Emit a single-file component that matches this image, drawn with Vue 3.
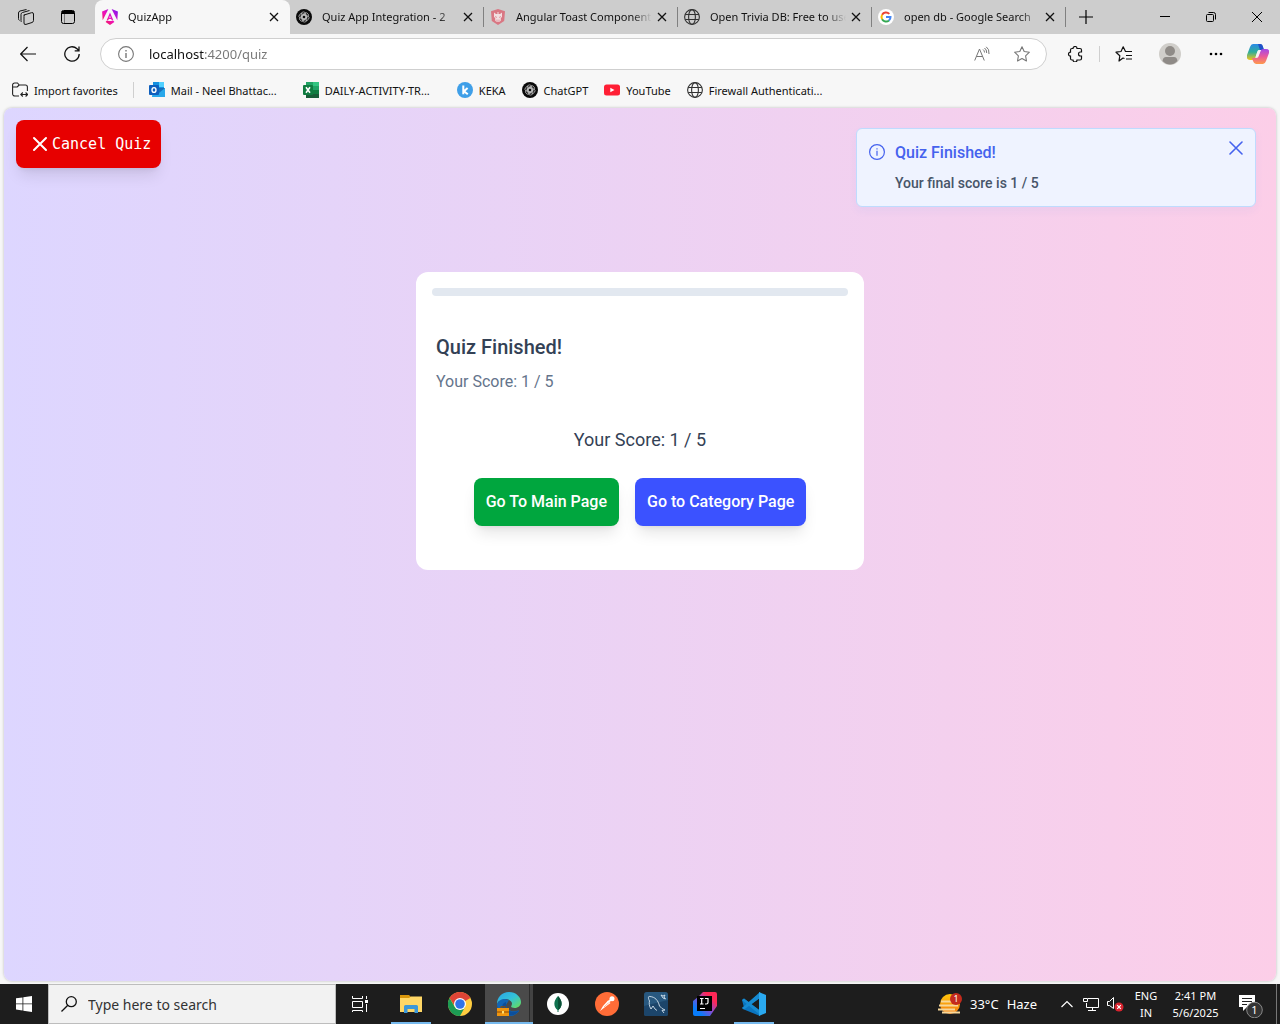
<script setup>
import { ref } from 'vue'

const address = ref('localhost:4200/quiz')
const search = ref('')
const score = 1
const total = 5

const tabs = [
  { title: 'QuizApp', icon: 'angular', active: true },
  { title: 'Quiz App Integration - 2', icon: 'gpt' },
  { title: 'Angular Toast Component', icon: 'prime' },
  { title: 'Open Trivia DB: Free to use', icon: 'globe' },
  { title: 'open db - Google Search', icon: 'google' },
]

const bookmarks = [
  { title: 'Mail - Neel Bhattac...', icon: 'outlook', long: true },
  { title: 'DAILY-ACTIVITY-TR...', icon: 'excel', long: true },
  { title: 'KEKA', icon: 'keka' },
  { title: 'ChatGPT', icon: 'gpt' },
  { title: 'YouTube', icon: 'youtube' },
  { title: 'Firewall Authenticati...', icon: 'globe' },
]

const apps = [
  { name: 'File Explorer', icon: 'explorer', open: true },
  { name: 'Chrome', icon: 'chrome' },
  { name: 'Edge', icon: 'edge', current: true },
  { name: 'MongoDB Compass', icon: 'mongo' },
  { name: 'Postman', icon: 'postman' },
  { name: 'MySQL Workbench', icon: 'mysql' },
  { name: 'IntelliJ IDEA', icon: 'idea' },
  { name: 'Visual Studio Code', icon: 'vscode', open: true },
]
</script>

<template>
  <div class="desktop">
    <svg class="sprite" aria-hidden="true">
      <defs>
        <linearGradient id="ng" x1="0" y1="1" x2="1" y2="0">
          <stop offset="0" stop-color="#f0223c" /><stop offset=".45" stop-color="#f011b8" /><stop offset="1" stop-color="#7a14f5" />
        </linearGradient>
        <linearGradient id="edgeTop" x1="0" y1="0" x2="1" y2="1">
          <stop offset="0" stop-color="#2aa5e8" /><stop offset=".5" stop-color="#33c3d8" /><stop offset="1" stop-color="#6be04f" />
        </linearGradient>
        <linearGradient id="ideaBg" x1="0" y1="1" x2="1" y2="0">
          <stop offset=".2" stop-color="#087cfa" /><stop offset=".5" stop-color="#8a4bd0" /><stop offset=".75" stop-color="#fe2857" />
        </linearGradient>
        <linearGradient id="copA" x1="0" y1="0" x2="0" y2="1">
          <stop offset="0" stop-color="#2a8ae8" /><stop offset=".5" stop-color="#2fae9a" /><stop offset="1" stop-color="#f5c518" />
        </linearGradient>
        <linearGradient id="copB" x1="0" y1="0" x2="0" y2="1">
          <stop offset="0" stop-color="#a349e8" /><stop offset=".5" stop-color="#ea5a9c" /><stop offset="1" stop-color="#ff9a4a" />
        </linearGradient>
        <linearGradient id="sun" x1="0" y1="0" x2="0" y2="1">
          <stop offset="0" stop-color="#ffc60a" /><stop offset="1" stop-color="#f47a12" />
        </linearGradient>
      </defs>
      <symbol id="i-angular" viewBox="0 0 16 16">
        <path fill="url(#ng)" fill-rule="evenodd" d="M9.600 0 15.900 2.600 15.300 11.300zM6.400 0 .1 2.600.7 11.300zM8 3.500 11.400 11.600H9.900L9.200 9.900H6.800L6.100 11.600H4.600zM12.400 13.100 8 16 3.600 13.100 4.400 12H11.600zM8 6.800 7.200 8.800H8.800z" />
      </symbol>
      <symbol id="i-gpt" viewBox="0 0 16 16">
        <circle cx="8" cy="8" r="8" fill="#0a0a0a" />
        <g fill="none" stroke="#c8c8c8" stroke-width=".7">
          <rect x="5.200" y="2.900" width="4.600" height="7.400" rx="2.300" />
          <rect x="5.200" y="2.900" width="4.600" height="7.400" rx="2.300" transform="rotate(60 8 8)" />
          <rect x="5.200" y="2.900" width="4.600" height="7.400" rx="2.300" transform="rotate(120 8 8)" />
          <rect x="5.200" y="2.900" width="4.600" height="7.400" rx="2.300" transform="rotate(180 8 8)" />
          <rect x="5.200" y="2.900" width="4.600" height="7.400" rx="2.300" transform="rotate(240 8 8)" />
          <rect x="5.200" y="2.900" width="4.600" height="7.400" rx="2.300" transform="rotate(300 8 8)" />
        </g>
      </symbol>
      <symbol id="i-prime" viewBox="0 0 16 16">
        <path fill="#d97783" d="M8 0 15 2.200 14.200 12 8 16 1.800 12 1 2.200z" />
        <path fill="#f2dfe1" d="M4 3.500 6 5H7.500V3H8.500V5H10L12 3.500V8L10.800 9V11.500L9.500 13H6.500L5.200 11.500V9L4 8z" />
        <path stroke="#d97783" stroke-width=".7" d="M5 7.500 7 8.500M11 7.500 9 8.500M7 10.500V13M9 10.500V13" />
      </symbol>
      <symbol id="i-globe" viewBox="0 0 16 16">
        <g fill="none" stroke="#333" stroke-width="1.100">
          <circle cx="8" cy="8" r="7.400" /><ellipse cx="8" cy="8" rx="3.400" ry="7.400" /><path d="M1.200 5.500H14.800M1.200 10.500H14.800" />
        </g>
      </symbol>
      <symbol id="i-google" viewBox="0 0 16 16">
        <circle cx="8" cy="8" r="8" fill="#fff" />
        <g fill="none" stroke-width="2">
          <path stroke="#ea4335" d="M4.100 5.800A4.500 4.500 0 0 1 11.300 4.900" />
          <path stroke="#fbbc05" d="M4.100 5.800A4.500 4.500 0 0 0 4.100 10.200" />
          <path stroke="#34a853" d="M4.100 10.200A4.500 4.500 0 0 0 11 11.400" />
          <path stroke="#4285f4" d="M8 8H12.500A4.500 4.500 0 0 1 11 11.400" />
        </g>
      </symbol>
      <symbol id="i-outlook" viewBox="0 0 16 16">
        <path fill="#1490df" d="M4 0H15V10H4z" /><path fill="#50d0ff" d="M10 0H15V5H10z" /><path fill="#28a8ea" d="M4 7 16 6V15H3z" />
        <path fill="#0a4a9a" d="M5 6H16L10 11z" opacity=".6" /><rect y="3" width="10" height="10" rx="1" fill="#0f5fbd" />
        <ellipse cx="5" cy="8" rx="2" ry="2.400" fill="none" stroke="#fff" stroke-width="1.400" />
      </symbol>
      <symbol id="i-excel" viewBox="0 0 16 16">
        <path fill="#21a366" d="M3 0H10V8H3z" /><path fill="#33c481" d="M10 0H16V4H10z" /><path fill="#21a366" d="M10 4H16V8H10z" /><path fill="#107c41" d="M10 8H16V12H10z" /><path fill="#185c37" d="M3 8H10V12H16V16H3z" />
        <rect y="3" width="10" height="10" rx="1" fill="#107c41" /><path stroke="#fff" stroke-width="1.600" d="M3 5.200 7 10.800M7 5.200 3 10.800" />
      </symbol>
      <symbol id="i-keka" viewBox="0 0 16 16">
        <circle cx="8" cy="8" r="8" fill="#3f9fe8" /><path fill="none" stroke="#fff" stroke-width="2" d="M6.300 3.500V12.200M10.600 6 7 9.200 10.800 12.200" />
      </symbol>
      <symbol id="i-youtube" viewBox="0 0 16 16">
        <rect y="2.500" width="16" height="11" rx="2.500" fill="#ff1f35" /><path fill="#fff" d="M6.300 5.800 10.500 8 6.300 10.200z" />
      </symbol>
      <symbol id="i-import" viewBox="0 0 16 16">
        <path fill="none" stroke="#222" stroke-width="1.100" d="M7 14H3A2.200 2.200 0 0 1 .6 12V3A2 2 0 0 1 2.600 1H5.500L7.200 3H13.400A2 2 0 0 1 15.400 5V9M.8 5H5.200L7.200 3M9 12.500H15.500M10.800 10.500 8.800 12.500 10.800 14.500M13.600 10.500 15.600 12.500 13.600 14.500" />
      </symbol>
      <symbol id="i-close" viewBox="0 0 16 16">
        <path fill="none" stroke="currentColor" stroke-width="1.300" d="M4 4 12 12M12 4 4 12" />
      </symbol>
      <symbol id="i-explorer" viewBox="0 0 24 24">
        <path fill="#d9960a" d="M1 3H10L12 5V8H1z" /><path fill="#ffd766" d="M1 6H10L12 4.500H23V20H1z" /><path fill="#3d98d8" d="M5 20V14.500Q5 13 6.500 13H17.500Q19 13 19 14.500V21H15.500V17H8.500V21H5z" />
      </symbol>
      <symbol id="i-chrome" viewBox="0 0 24 24">
        <circle cx="12" cy="12" r="12" fill="#ffcd40" /><path fill="#de4436" d="M12 12 6 13 1.600 6A12 12 0 0 1 22.400 6z" /><path fill="#1c9b54" d="M1.600 6 6.800 15 12 18 17 15 12 24A12 12 0 0 1 1.600 6z" />
        <circle cx="12" cy="12" r="6" fill="#fff" /><circle cx="12" cy="12" r="4.800" fill="#2f73e8" />
      </symbol>
      <symbol id="i-edge" viewBox="0 0 24 24">
        <path fill="#1265b5" d="M0 12A12 12 0 0 0 19 22C22 20 23 18 21 18.500 14 21 9 17 9 13L12 8 4 6z" />
        <path fill="#0c4f9c" d="M9 10C8 18 14 22 22 18.500 18 25 11 25 7 20 4 15 5 11 9 10z" />
        <path fill="url(#edgeTop)" d="M0 12C0 5 5 0 12 0 19 0 24 5 24 10 24 15 19 17 15 15.500 13 14.500 15 14 15 11.500 15 9 12 7 8 7 4 7 1 9 0 12z" />
        <path fill="#f0960e" d="M0 16H12V24H0z" /><path fill="#8d4b04" d="M3.500 16V14.200H8.500V16H7.300V15.200H4.700V16zM0 19.500H12V20.500H0z" /><path fill="#ffdf70" d="M5 19H7V21.500H5z" />
      </symbol>
      <symbol id="i-mongo" viewBox="0 0 24 24">
        <circle cx="12" cy="12" r="11" fill="#fff" /><path fill="#10724f" d="M12 4C17 9 16.500 15 12.500 18V20H11.500V18C7.500 15 7 9 12 4z" /><path fill="#0a4f36" d="M12 4C17 9 16.500 15 12.200 18z" />
      </symbol>
      <symbol id="i-postman" viewBox="0 0 24 24">
        <circle cx="12" cy="12" r="12" fill="#ff6c37" /><path fill="#fff" d="M8 14 13 8.500 15.500 11 9.500 15.500 5 19z" /><circle cx="17" cy="6.800" r="2.500" fill="#fff" /><path stroke="#ffb598" d="M9 15 15 9.500" /><path stroke="#fff" stroke-width="2" d="M13 10 17 7" />
      </symbol>
      <symbol id="i-mysql" viewBox="0 0 24 24">
        <rect width="24" height="24" rx="2.500" fill="#28587f" /><path fill="#1c456a" d="M0 14 24 8V22Q24 24 22 24H2Q0 24 0 22z" />
        <path fill="none" stroke="#d5e3ee" stroke-width=".9" d="M7 17C5 14 5 11 5.500 9 4 6 4 4 6 4.500 11 5 14 8 15.500 14L18 16.500 21 18 18 18.500 20 21M7 17 9 14 11 17 13 18.500M17 3 19 4 21 3 20 5 21.500 7 19 6z" />
      </symbol>
      <symbol id="i-idea" viewBox="0 0 24 24">
        <path fill="url(#ideaBg)" d="M0 9 5 5 10 0H22Q24 0 24 2V14L17 24H2Q0 24 0 22z" /><rect x="4" y="4" width="15" height="15" fill="#000" />
        <path fill="none" stroke="#fff" stroke-width="1.200" d="M7 6.500H10.500M8.700 6.500V12M7 12H10.500M12 6.500H15V10.500Q15 12 13.300 12H12M7 16.500H12" />
      </symbol>
      <symbol id="i-vscode" viewBox="0 0 24 24">
        <path fill="#0a75bf" d="M0 8 2 6.500 18 19V24L2 17.500 0 16 14 4 18 5.500 2.500 17.500" /><path fill="#168bd2" d="M0 8 2 6.500 18 18.500V23zM0 16 18 0V6L2 17.500z" /><path fill="#2aa9f0" d="M17 0 24 3V21L17 24z" />
      </symbol>
    </svg>

    <header class="browser">
      <div class="tab-strip">
        <div class="strip-tools">
          <button class="strip-btn" aria-label="Workspaces">
            <svg width="16" height="16" viewBox="0 0 16 16" fill="none" stroke="#111"><path d="M5.500 6.200 13.500 3.700Q15.500 3.200 15.500 5V11.500Q15.500 13 14 13.500L8 15.400Q6 16 6 14V7.500Q6 6 7 5.700M3.500 13Q3 12.500 3 11.500V5.500Q3 4 4.500 3.500L11.500 1.500M1.500 11.500Q.5 11 .5 9.500V4Q.5 2.500 2 2L8.500.5" /></svg>
          </button>
          <button class="strip-btn" aria-label="Tab actions">
            <svg width="14" height="14" viewBox="0 0 14 14"><rect x=".5" y=".5" width="13" height="13" rx="2" fill="none" stroke="#000" /><path d="M1 1H13V4H1z" fill="#000" /><path d="M3.500 4V13" stroke="#777" /></svg>
          </button>
        </div>
        <div v-for="tab in tabs" :key="tab.title" class="tab" :class="{ active: tab.active }">
          <button class="tab-main">
            <svg width="16" height="16" class="fav"><use :href="'#i-' + tab.icon" /></svg>
            <span class="tab-title">{{ tab.title }}</span>
          </button>
          <button class="tab-close" :aria-label="'Close ' + tab.title"><svg width="16" height="16"><use href="#i-close" /></svg></button>
        </div>
        <button class="new-tab" aria-label="New tab">
          <svg width="14" height="14" viewBox="0 0 14 14" stroke="#000"><path d="M7 0V14M0 7H14" stroke-width="1.200" /></svg>
        </button>
        <div class="window-controls">
          <button aria-label="Minimize"><svg width="10" height="10" viewBox="0 0 10 10" stroke="#000"><path d="M0 4.500H10" /></svg></button>
          <button aria-label="Restore"><svg width="10" height="10" viewBox="0 0 10 10" fill="none" stroke="#000"><rect x=".5" y="2.500" width="7" height="7" rx="1" /><path d="M2.500.5H7.500Q9.500.5 9.500 2.500V7.500" /></svg></button>
          <button aria-label="Close"><svg width="10" height="10" viewBox="0 0 10 10" stroke="#000"><path d="M0 0 10 10M10 0 0 10" /></svg></button>
        </div>
      </div>

      <div class="toolbar">
        <button class="nav" aria-label="Back">
          <svg width="16" height="16" viewBox="0 0 16 16" fill="none" stroke="#111" stroke-width="1.200"><path d="M7.500 1 .7 8 7.500 15M.7 8H16" /></svg>
        </button>
        <button class="nav" aria-label="Refresh">
          <svg width="16" height="16" viewBox="0 0 16 16" fill="none" stroke="#111" stroke-width="1.300"><path d="M15.200 8A7.200 7.200 0 1 1 13 2.800L14.800 4.500M15 .5V4.800H10.700" /></svg>
        </button>
        <label class="address">
          <svg width="16" height="16" viewBox="0 0 16 16"><circle cx="8" cy="8" r="7.400" fill="none" stroke="#777" stroke-width="1.100" /><path d="M7.300 7H8.700V12H7.300zM7.300 4H8.700V5.500H7.300z" fill="#777" /></svg>
          <input v-model="address" type="text" aria-label="Address" />
          <button aria-label="Read aloud">
            <svg width="16" height="16" viewBox="0 0 16 16" fill="none" stroke="#777"><path d="M.7 14.500 5.500 3 10.300 14.500M2.400 10.500H8.600M9 3.500Q10.500 4.500 10.500 6.500M10.500 2Q12.800 3.500 12.700 7M12.200.8Q15.500 3 15 8" /></svg>
          </button>
          <button aria-label="Add to favorites">
            <svg width="16" height="16" viewBox="0 0 16 16" fill="none" stroke="#777" stroke-width="1.100" stroke-linejoin="round"><path d="M8 .8 10.200 5.500 15.400 6.200 11.600 9.800 12.500 15 8 12.500 3.500 15 4.400 9.800.6 6.200 5.800 5.500z" /></svg>
          </button>
        </label>
        <div class="tools">
          <button aria-label="Extensions">
            <svg width="16" height="16" viewBox="0 0 16 16" fill="none" stroke="#111" stroke-width="1.200"><path d="M6 2.500A2 2 0 0 1 10 2.500H13Q14.500 2.500 14.500 4V6H13.500A2 2 0 0 0 13.500 10H14.500V12.500Q14.500 14 13 14H10A2 2 0 0 1 6 14H5Q3.500 14 3.500 12.500V10.200A2 2 0 0 1 3.500 6.200V4Q3.500 2.500 5 2.500z" /></svg>
          </button>
          <span class="rule"></span>
          <button aria-label="Favorites">
            <svg width="18" height="16" viewBox="0 0 18 16" fill="none" stroke="#111" stroke-width="1.200" stroke-linejoin="round"><path d="M9.500 12.500 8 12 4 15 4.800 9.800 1 6.200 6 5.500 8.200.8 10.500 5.500H17M11 9.500H17M11 13H17" /></svg>
          </button>
          <button class="spaced" aria-label="Profile">
            <svg width="22" height="22" viewBox="0 0 22 22"><circle cx="11" cy="11" r="11" fill="#d0ceca" /><circle cx="11" cy="8" r="5" fill="#8f8b87" /><path d="M3.500 18Q4 14 7 14H15Q18 14 18.500 18Q15 21.500 11 21.500T3.500 18z" fill="#8f8b87" /></svg>
          </button>
          <button class="spaced" aria-label="Settings and more">
            <svg width="14" height="4" viewBox="0 0 14 4"><circle cx="2" cy="2" r="1.300" /><circle cx="7" cy="2" r="1.300" /><circle cx="12" cy="2" r="1.300" /></svg>
          </button>
          <button class="copilot" aria-label="Copilot">
            <svg width="22" height="20" viewBox="0 0 22 20"><path fill="url(#copA)" d="M6 0H13Q15 0 16 3L17 6H13Q11 6 10 9L8 15Q7 16 5 16H3Q-1 16 0 11L3 3Q4 0 6 0z" /><path fill="#2052c8" d="M11 0H13.500Q15.500 0 16 3L17 6H13z" /><path fill="url(#copB)" d="M16 20H9Q7 20 6 17L5 14H9Q11 14 12 11L14 6Q15 5 17 5H19Q23 5 22 9L19 17Q18 20 16 20z" /><path fill="#f6f3f4" d="M10.500 7 8.500 13.500H11L13.500 6H11.500z" /></svg>
          </button>
        </div>
      </div>

      <nav class="bookmarks" aria-label="Favorites bar">
        <a href="#"><svg width="16" height="16"><use href="#i-import" /></svg>Import favorites</a>
        <span class="rule"></span>
        <a v-for="b in bookmarks" :key="b.title" href="#" :class="{ long: b.long }">
          <svg width="16" height="16"><use :href="'#i-' + b.icon" /></svg>{{ b.title }}
        </a>
      </nav>
    </header>

    <main class="page">
      <button class="cancel">
        <svg width="16" height="16" viewBox="0 0 16 16" stroke="#fff" stroke-width="2" stroke-linecap="round"><path d="M2 2 14 14M14 2 2 14" /></svg>
        Cancel Quiz
      </button>

      <section class="card">
        <div class="progress" role="progressbar" aria-label="Quiz progress" aria-valuenow="0"></div>
        <div class="card-body">
          <h1>Quiz Finished!</h1>
          <p class="subtitle">Your Score: {{ score }} / {{ total }}</p>
          <p class="score">Your Score: {{ score }} / {{ total }}</p>
          <div class="actions">
            <button class="main-page">Go To Main Page</button>
            <button class="category-page">Go to Category Page</button>
          </div>
        </div>
      </section>

      <aside class="toast" role="status">
        <svg class="toast-icon" width="16" height="16" viewBox="0 0 16 16"><circle cx="8" cy="8" r="7.400" fill="none" stroke="#4562ee" stroke-width="1.200" /><path d="M7.400 6.800H8.600V11.800H7.400zM7.400 4.200H8.600V5.600H7.400z" fill="#4562ee" /></svg>
        <div class="toast-text">
          <strong>Quiz Finished!</strong>
          <p>Your final score is {{ score }} / {{ total }}</p>
        </div>
        <button class="toast-close" aria-label="Dismiss">
          <svg width="14" height="14" viewBox="0 0 14 14" stroke="#4562ee" stroke-width="1.600" stroke-linecap="round"><path d="M1 1 13 13M13 1 1 13" /></svg>
        </button>
      </aside>
    </main>

    <footer class="taskbar">
      <button class="app" aria-label="Start">
        <svg width="16" height="16" viewBox="0 0 16 16" fill="#fff"><path d="M0 2.300 6.500 1.400V7.500H0zM7.300 1.300 16 0V7.500H7.300zM0 8.300H6.500V14.500L0 13.600zM7.300 8.300H16V16L7.300 14.700z" /></svg>
      </button>
      <label class="search">
        <svg width="16" height="16" viewBox="0 0 16 16" fill="none" stroke="#111" stroke-width="1.300"><circle cx="10.300" cy="5.700" r="5" /><path d="M6.800 9.200.5 15.500" /></svg>
        <input v-model="search" type="text" placeholder="Type here to search" aria-label="Search" />
      </label>
      <button class="app task-view" aria-label="Task view">
        <svg width="16" height="16" viewBox="0 0 16 16" fill="none" stroke="#fff"><path d="M.5 0V2.500H10.500V0M.5 5.500H10.500V11.500H.5zM.5 16V14.500H10.500V16M14.500 0V3M14.500 8V16" /><path d="M13 4H16V7H13z" fill="#fff" stroke="none" /></svg>
      </button>
      <div class="apps">
        <button v-for="a in apps" :key="a.name" class="app" :class="{ open: a.open, current: a.current }" :aria-label="a.name">
          <svg width="24" height="24"><use :href="'#i-' + a.icon" /></svg>
        </button>
      </div>
      <div class="tray">
        <button class="weather">
          <svg width="24" height="24" viewBox="0 0 24 24"><circle cx="12" cy="12" r="10" fill="url(#sun)" /><path stroke="#f7d79a" stroke-width="1.800" d="M3 9.500H17M1 13.500H20M0 17.500H17M4 20.500H22" /><circle cx="18" cy="7" r="6" fill="#c42b1c" /><text x="18" y="10" fill="#fff" font-size="9" text-anchor="middle">1</text></svg>
          <span>33°C</span><span>Haze</span>
        </button>
        <button aria-label="Show hidden icons"><svg width="12" height="8" viewBox="0 0 12 8" fill="none" stroke="#fff" stroke-width="1.200"><path d="M.5 7 6 1.500 11.500 7" /></svg></button>
        <button aria-label="Network"><svg width="16" height="14" viewBox="0 0 16 14" fill="none" stroke="#fff"><path d="M5 1.500H15.500V10.500H3.500V6M.5 1.500H4.500V4.500H.5zM9.500 10.500V13.500M5 13.500H13" /></svg></button>
        <button aria-label="Volume muted"><svg width="17" height="16" viewBox="0 0 17 16"><path d="M.5 5.500H2.500L6.500 1.500V12.500L2.500 9.500H.5z" fill="none" stroke="#fff" /><circle cx="12" cy="11" r="4.500" fill="#d8232e" /><path d="M10.200 9.200 13.800 12.800M13.800 9.200 10.200 12.800" stroke="#fff" stroke-width="1.200" /></svg></button>
        <button class="lang">ENG<br />IN</button>
        <button class="clock">2:41 PM<br />5/6/2025</button>
        <button class="notify" aria-label="Notifications, 1 new">
          <svg width="24" height="24" viewBox="0 0 24 24"><path d="M0 1H16V13H8L4 17V13H0z" fill="#fff" /><path d="M3 4.500H13M3 7.500H13M3 10.500H8" stroke="#222" /><circle cx="15.500" cy="16" r="7.800" fill="#333" stroke="#888" /><text x="15.500" y="20" fill="#fff" font-size="11" text-anchor="middle">1</text></svg>
        </button>
        <span class="peek"></span>
      </div>
    </footer>
  </div>
</template>

<style>
body { margin: 0; }
</style>

<style scoped>
* { box-sizing: border-box; }
button { border: 0; padding: 0; background: none; font: inherit; color: inherit; display: flex; align-items: center; justify-content: center; }
input { border: 0; padding: 0; background: none; outline: 0; font: inherit; min-width: 0; flex: 1; }
a { color: inherit; text-decoration: none; }
p, h1 { margin: 0; }
svg { flex: none; display: block; }
.sprite { position: absolute; width: 0; height: 0; }
.desktop { min-height: 100vh; display: flex; flex-direction: column; background: #f7f7f7; color: #111; font: 11px "Noto Sans", sans-serif; }

.tab-strip { display: flex; height: 34px; background: #cdcdcd; }
.strip-tools { display: flex; padding: 0 6px 0 5px; }
.strip-btn { width: 42px; }
.tab { position: relative; flex: 0 1 194px; min-width: 0; display: flex; align-items: center; padding: 0 6px; }
.tab:not(.active)::after { content: ""; position: absolute; right: 0; top: 7px; bottom: 7px; width: 1px; background: #808080; }
.tab.active { flex-basis: 195px; padding-left: 7px; background: #f7f7f7; border-radius: 8px 8px 0 0; }
.tab-main { flex: 1; min-width: 0; gap: 10px; justify-content: flex-start; }
.tab-title { flex: 1; min-width: 0; overflow: hidden; white-space: nowrap; text-align: left; line-height: 20px; mask-image: linear-gradient(to right, #000 calc(100% - 20px), transparent); }
.tab-close { width: 20px; height: 20px; }
.new-tab { width: 40px; }
.window-controls { display: flex; margin-left: auto; }
.window-controls button { width: 46px; }

.toolbar { display: flex; align-items: center; height: 40px; padding: 0 2px 0 6px; }
.nav { width: 44px; height: 32px; }
.address { flex: 1; min-width: 0; height: 32px; display: flex; align-items: center; margin: 0 8px 0 6px; padding: 0 4px 0 17px; background: #fff; border: 1px solid #cfcfcf; border-radius: 16px; font-size: 13px; }
.address input { margin-left: 15px; height: 24px; color: transparent; caret-color: #111; background: linear-gradient(to right, #111 55px, #767676 55px) text; }
.address button { width: 40px; height: 28px; }
.tools { display: flex; align-items: center; }
.tools button { width: 40px; height: 32px; }
.tools .spaced { margin-left: 6px; }
.tools .copilot { margin-left: 2px; }
.rule { width: 1px; height: 16px; background: #cfcfcf; margin: 0 4px; }

.bookmarks { display: flex; align-items: center; gap: 16px; height: 34px; padding: 0 12px 2px; white-space: nowrap; }
.bookmarks a { display: flex; align-items: center; gap: 6px; }
.bookmarks .long { width: 138px; }
.bookmarks .rule { margin: 0 -1px; }

.page { position: relative; flex: 1; margin: 0 4px 3px; padding: 12px; border-radius: 8px; background: linear-gradient(to right, #ddd6ff, #fccee8); box-shadow: 0 0 3px rgba(0, 0, 0, 0.25); font-family: Roboto, sans-serif; font-size: 16px; }
.cancel { height: 48px; padding: 0 10px 0 16px; gap: 4px; border-radius: 8px; background: #e70000; color: #fff; font: 15px "DejaVu Sans Mono", monospace; box-shadow: 0 10px 15px -3px rgba(0, 0, 0, 0.1), 0 4px 6px -4px rgba(0, 0, 0, 0.1); }
.card { max-width: 448px; margin: 104px auto 0; padding: 16px 16px 24px; border-radius: 12px; background: #fff; }
.progress { height: 8px; border-radius: 4px; background: #e2e8f0; }
.card-body { padding: 36px 4px 20px; }
h1 { font-size: 20px; line-height: 30px; font-weight: 500; color: #334155; }
.subtitle { margin-top: 8px; line-height: 24px; color: #64748b; }
.score { margin-top: 32px; font-size: 18px; line-height: 28px; text-align: center; color: #334155; }
.actions { display: flex; justify-content: center; gap: 16px; margin-top: 24px; }
.actions button { height: 48px; padding: 0 12px 2px; border-radius: 8px; color: #fff; font-weight: 500; box-shadow: 0 10px 15px -3px rgba(0, 0, 0, 0.1), 0 4px 6px -4px rgba(0, 0, 0, 0.1); }
.main-page { background: #00a63e; }
.category-page { background: #3b52ff; }

.toast { position: absolute; top: 20px; right: 20px; width: 400px; display: flex; align-items: flex-start; padding: 11px; border: 1px solid #bfdbfe; border-radius: 6px; background: #eff3ff; box-shadow: 0 4px 8px rgba(59, 130, 246, 0.06); }
.toast-icon { margin: 4px 0 0 1px; }
.toast-text { flex: 1; margin-left: 10px; }
.toast strong { display: block; font-weight: 500; line-height: 26px; color: #4562ee; }
.toast p { margin-top: 5px; font-size: 14px; font-weight: 500; line-height: 24px; color: #475569; }
.toast-close { width: 16px; height: 16px; }

.taskbar { display: flex; height: 40px; background: #1d1d1d; color: #fff; }
.app { width: 48px; }
.search { flex: 0 1 288px; display: flex; align-items: center; gap: 11px; padding: 0 12px; background: #f2f2f2; border: 1px solid #bdbdbd; font-size: 14px; }
.search input::placeholder { color: #333; opacity: 1; }
.task-view { margin-right: 3px; }
.apps { display: flex; gap: 1px; }
.open { background: linear-gradient(#76b9ed, #76b9ed) bottom / 40px 2px no-repeat; }
.current { background: linear-gradient(#76b9ed, #76b9ed) bottom / 48px 2px no-repeat, linear-gradient(to right, #4a4a4a 44px, #2b2b2b 44px, #2b2b2b 45px, #434343 45px); }
.tray { display: flex; margin-left: auto; }
.tray button { width: 24px; }
.tray .weather { width: auto; gap: 8px; margin-right: 18px; font-size: 13px; }
.tray .lang { width: 38px; line-height: 17px; }
.tray .clock { width: 61px; line-height: 17px; }
.tray .notify { width: 50px; padding-top: 4px; }
.peek { width: 4px; border-left: 1px solid #777; }
</style>
